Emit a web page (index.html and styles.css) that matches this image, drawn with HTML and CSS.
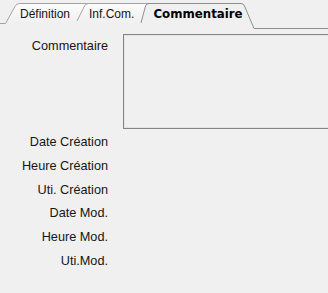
FILE: index.html
```html
<!DOCTYPE html>
<html lang="fr">
<head>
    <meta charset="UTF-8">
    <title>Commentaire</title>
    <link rel="stylesheet" href="styles.css">
</head>
<body>

<!-- onglets -->
<div class="tabs">
    <svg class="tab-shape" width="328" height="30" viewBox="0 0 328 30">
        <defs>
            <linearGradient id="tabGrad" x1="0" y1="0" x2="0" y2="1">
                <stop offset="0" stop-color="#fbfbfb"/>
                <stop offset="1" stop-color="#f0f0f0"/>
            </linearGradient>
        </defs>
        <path class="tab-fill" d="M5.5 24 L15 6.5 Q16.5 3.5 19.5 3.5 H90 V24 Z"/>
        <path class="tab-line" d="M0 23.5 H5.5 L15 6.5 Q16.5 3.5 19.5 3.5 H90"/>
        <path class="tab-fill" d="M77 24 L84.5 6 Q85.8 3.5 88.5 3.5 H150 V24 Z"/>
        <path class="tab-line" d="M77 21 L84.5 6 Q85.8 3.5 88.5 3.5 H150"/>
        <path class="tab-fill-active" d="M141 30 L145.5 6 Q146.3 3.5 149 3.5 H241 Q243.5 3.5 244.5 6 L254 30 Z"/>
        <path class="tab-line active" d="M141 23 L145.5 6 Q146.3 3.5 149 3.5 H241 Q243.5 3.5 244.5 6 L254 28.5 H328"/>
    </svg>
    <span class="tab">Définition</span>
    <span class="tab">Inf.Com.</span>
    <span class="tab current">Commentaire</span>
</div>

<!-- contenu de l'onglet -->
<div class="form">
    <div class="label first">Commentaire</div>
    <div class="memo"></div>

    <div class="label">Date Création</div>
    <div class="value"></div>
    <div class="label">Heure Création</div>
    <div class="value"></div>
    <div class="label">Uti. Création</div>
    <div class="value"></div>
    <div class="label">Date Mod.</div>
    <div class="value"></div>
    <div class="label">Heure Mod.</div>
    <div class="value"></div>
    <div class="label">Uti.Mod.</div>
    <div class="value"></div>
</div>

</body>
</html>
```

FILE: styles.css
```css
body {
    margin: 0;
    background: #f0f0f0;
    color: #151515;
    font-family: 'Liberation Sans', Arial, sans-serif;
    overflow: hidden;
}

/* onglets */
.tabs {
    position: relative;
    height: 29px;
    display: flex;
    gap: 19px;
    padding-left: 20px;
    font-size: 12px;
    line-height: 29px;
}

.tab-shape {
    position: absolute;
    left: 0;
    top: 0;
}

.tab-fill {
    fill: url(#tabGrad);
}

.tab-fill-active {
    fill: #f0f0f0;
}

.tab-line {
    fill: none;
    stroke: #a3a3a3;
    stroke-width: 1;
}

.tab-line.active {
    stroke: #8e8e8e;
}

.tab {
    position: relative;
    white-space: nowrap;
}

.tab.current {
    font-family: 'DejaVu Sans', sans-serif;
    font-weight: bold;
    font-size: 11.8px;
    color: #000;
}

/* formulaire */
.form {
    display: grid;
    grid-template-columns: 108px 1fr;
    column-gap: 15px;
    padding-top: 5px;
    font-size: 12.7px;
}

.label {
    text-align: right;
    white-space: nowrap;
    height: 23.7px;
    line-height: 23.7px;
}

.label.first {
    height: auto;
    line-height: 16px;
    padding-top: 4px;
}

.memo {
    height: 95px;
    margin-right: -6px;
    margin-bottom: 2.3px;
    border: 1px solid #858585;
    box-sizing: border-box;
    box-shadow: inset 0 0 0 1px #e4e4e4;
}

.value {
    height: 23.7px;
}
```
